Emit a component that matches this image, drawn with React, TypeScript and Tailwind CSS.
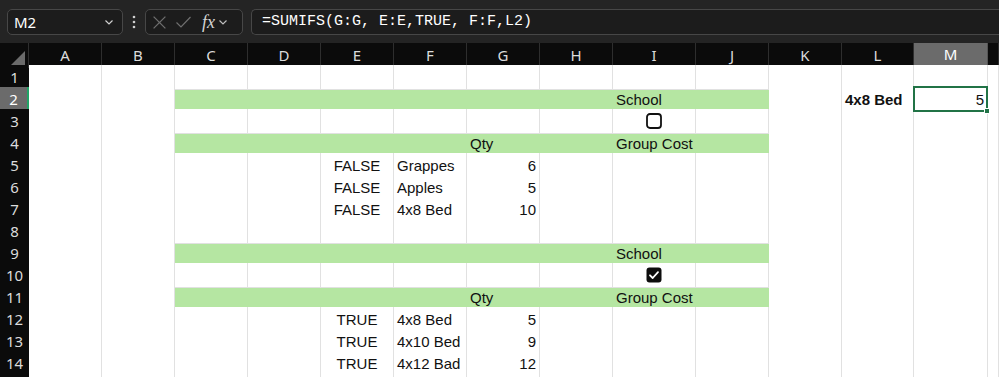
import React from 'react';

type Cell = {
  text?: string;
  align?: 'left' | 'center' | 'right';
  bold?: boolean;
  box?: 'off' | 'on';
};

const COLS = ['A', 'B', 'C', 'D', 'E', 'F', 'G', 'H', 'I', 'J', 'K', 'L', 'M', ''];
const ROW_GRID =
  'grid h-[22px] grid-cols-[29px_73px_73px_73px_73px_73px_73px_73px_73px_83px_73px_73px_72px_74px_1fr]';
const GREEN_GRID = 'grid h-full grid-cols-[73px_73px_73px_73px_73px_73px_83px_73px]';

const item = (name: string, qty: string, flag: string) => ({
  E: { text: flag, align: 'center' as const },
  F: { text: name },
  G: { text: qty, align: 'right' as const },
});

const rows: { green?: boolean; cells: Record<string, Cell> }[] = [
  { cells: {} },
  { green: true, cells: { I: { text: 'School' }, L: { text: '4x8 Bed', bold: true }, M: { text: '5', align: 'right' } } },
  { cells: { I: { box: 'off' } } },
  { green: true, cells: { G: { text: 'Qty' }, I: { text: 'Group Cost' } } },
  { cells: item('Grappes', '6', 'FALSE') },
  { cells: item('Apples', '5', 'FALSE') },
  { cells: item('4x8 Bed', '10', 'FALSE') },
  { cells: {} },
  { green: true, cells: { I: { text: 'School' } } },
  { cells: { I: { box: 'on' } } },
  { green: true, cells: { G: { text: 'Qty' }, I: { text: 'Group Cost' } } },
  { cells: item('4x8 Bed', '5', 'TRUE') },
  { cells: item('4x10 Bed', '9', 'TRUE') },
  { cells: item('4x12 Bad', '12', 'TRUE') },
  { cells: {} },
];

function Chevron({ className = '' }: { className?: string }) {
  return (
    <svg width="10" height="10" viewBox="0 0 10 10" fill="none" stroke="currentColor" strokeWidth="1.2" className={className}>
      <path d="M1.5 3.5 5 7l3.5-3.5" />
    </svg>
  );
}

function Checkbox({ on }: { on: boolean }) {
  return on ? (
    <svg width="16" height="16" viewBox="0 0 16 16">
      <rect x="0.5" y="0.5" width="15" height="15" rx="3" fill="#0d0d0d" />
      <path d="M4 8.3 6.7 11 12 5.2" fill="none" stroke="#fff" strokeWidth="1.8" strokeLinecap="round" strokeLinejoin="round" />
    </svg>
  ) : (
    <svg width="16" height="16" viewBox="0 0 16 16">
      <rect x="1" y="1" width="14" height="14" rx="3" fill="#fff" stroke="#111" strokeWidth="1.8" />
    </svg>
  );
}

function CellBody({ cell }: { cell?: Cell }) {
  if (!cell) return null;
  if (cell.box) {
    return (
      <div className="flex h-full w-full items-center justify-center pt-[1px]">
        <Checkbox on={cell.box === 'on'} />
      </div>
    );
  }
  const justify =
    cell.align === 'right' ? 'justify-end pr-[3px]' : cell.align === 'center' ? 'justify-center' : 'justify-start pl-[3px]';
  return (
    <div
      className={`flex h-full w-full items-center pt-[3px] whitespace-nowrap text-[15px] leading-[18px] text-[#111] ${justify} ${
        cell.bold ? 'font-bold' : ''
      }`}
    >
      {cell.text}
    </div>
  );
}

function SheetRow({ n, green, cells }: { n: number; green?: boolean; cells: Record<string, Cell> }) {
  const selected = n === 2;
  const plain = (c: string) => {
    const sel = selected && c === 'M';
    return (
      <div key={c} className={`relative border-r border-b border-[#e1e1e1] bg-white ${sel ? 'z-10' : ''}`}>
        <CellBody cell={cells[c]} />
        {sel && (
          <div className="absolute -top-[1px] -left-[1px] -right-[1px] -bottom-[1px] border-2 border-[#217346]">
            <div className="absolute -right-[4px] -bottom-[4px] h-[6px] w-[6px] border border-white bg-[#217346]" />
          </div>
        )}
      </div>
    );
  };
  return (
    <div className={ROW_GRID}>
      <div
        className={`flex items-center justify-center border-b pt-[1px] text-[15px] ${
          selected
            ? 'border-[#555] border-r-2 border-r-[#21a366] bg-[#6b6b6b] text-white'
            : 'border-[#2e2e2e] bg-[#0b0b0b] text-[#dcdcdc]'
        }`}
        style={{ fontFamily: '"Noto Sans", "Open Sans", sans-serif' }}
      >
        {n < 15 ? n : ''}
      </div>
      {plain('A')}
      {plain('B')}
      {green ? (
        <div className="col-span-8 border-b border-[#e1e1e1] bg-[#b5e6a2]">
          <div className={GREEN_GRID}>
            {['C', 'D', 'E', 'F', 'G', 'H', 'I', 'J'].map((c) => (
              <div key={c}>
                <CellBody cell={cells[c]} />
              </div>
            ))}
          </div>
        </div>
      ) : (
        ['C', 'D', 'E', 'F', 'G', 'H', 'I', 'J'].map(plain)
      )}
      {['K', 'L', 'M', 'N'].map(plain)}
    </div>
  );
}

export default function App() {
  return (
    <div
      className="h-[377px] w-[999px] overflow-hidden bg-white"
      style={{ fontFamily: '"Liberation Sans", Arial, sans-serif' }}
    >
      {/* formula bar */}
      <div
        className="flex h-[43px] items-center gap-[8px] bg-[#242424] pl-[7px] pt-[1px]"
        style={{ fontFamily: '"Noto Sans", "Open Sans", sans-serif' }}
      >
        <div className="flex h-[26px] w-[116px] items-center justify-between rounded-[5px] border border-[#474747] bg-[#1c1c1c] pl-[6px] pr-[8px] text-[15px] text-white">
          <span>M2</span>
          <Chevron className="text-[#cfcfcf]" />
        </div>
        <svg width="6" height="16" viewBox="0 0 6 16">
          <circle cx="3" cy="3" r="1.3" fill="#cfcfcf" />
          <circle cx="3" cy="8" r="1.3" fill="#cfcfcf" />
          <circle cx="3" cy="13" r="1.3" fill="#cfcfcf" />
        </svg>
        <div className="flex h-[26px] w-[98px] items-center gap-[8px] rounded-[5px] border border-[#474747] bg-[#1c1c1c] pl-[6px] text-[#6f6f6f]">
          <svg width="15" height="15" viewBox="0 0 14 14" stroke="currentColor" strokeWidth="1.2">
            <path d="M1.5 1.5l11 11M12.5 1.5l-11 11" />
          </svg>
          <svg width="17" height="14" viewBox="0 0 16 14" fill="none" stroke="currentColor" strokeWidth="1.2">
            <path d="M1 7.5l4.5 4.5L15 2" />
          </svg>
          <span className="ml-[2px] text-[18px] italic leading-none text-[#d4d4d4]" style={{ fontFamily: '"Liberation Serif", serif' }}>
            fx
          </span>
          <Chevron className="-ml-[5px] text-[#bdbdbd]" />
        </div>
        <div
          className="flex h-[26px] flex-1 items-center rounded-l-[5px] border border-r-0 border-[#474747] bg-[#1c1c1c] pl-[10px] text-[15px] text-white"
          style={{ fontFamily: '"Liberation Mono", "DejaVu Sans Mono", monospace' }}
        >
          =SUMIFS(G:G, E:E,TRUE, F:F,L2)
        </div>
      </div>

      {/* column headers */}
      <div
        className={`${ROW_GRID} bg-[#0b0b0b] text-[15px]`}
        style={{ fontFamily: '"Noto Sans", "Open Sans", sans-serif' }}
      >
        <div className="relative border-r border-[#2e2e2e]">
          <svg width="14" height="14" viewBox="0 0 14 14" className="absolute right-[3px] bottom-[3px]">
            <path d="M14 0v14H0z" fill="#6b6b6b" />
          </svg>
        </div>
        {COLS.map((c, i) => (
          <div
            key={i}
            className={`flex items-center justify-center border-r ${
              c === 'M'
                ? 'border-[#555] border-b-2 border-b-[#21a366] bg-[#6b6b6b] text-white'
                : 'border-[#2e2e2e] text-[#dcdcdc]'
            }`}
          >
            {c}
          </div>
        ))}
      </div>

      {rows.map((r, i) => (
        <SheetRow key={i} n={i + 1} green={r.green} cells={r.cells} />
      ))}
    </div>
  );
}
